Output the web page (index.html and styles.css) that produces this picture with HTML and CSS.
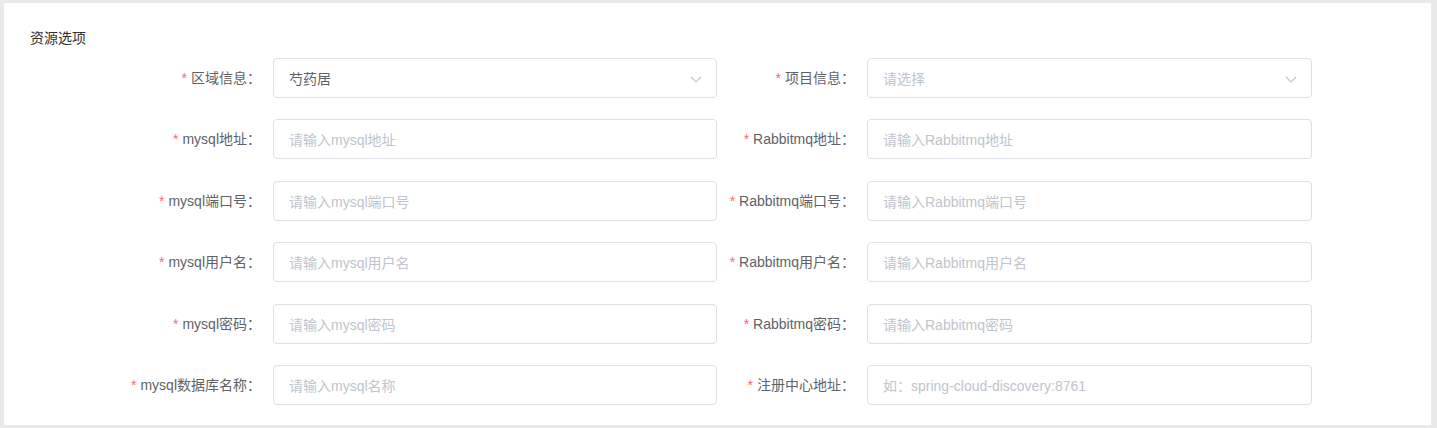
FILE: index.html
```html
<!DOCTYPE html>
<html lang="zh-CN">
<head>
<meta charset="utf-8">
<title>资源选项</title>
<link rel="stylesheet" href="styles.css">
</head>
<body>
<div class="card">
  <div class="title">资源选项</div>
  <div class="form">
    <label class="label"><span class="star">*</span>区域信息：</label>
    <div class="input select"><span class="value">芍药居</span><svg class="arrow" viewBox="0 0 12 7" width="12" height="7"><path d="M1 1 L6 6 L11 1" fill="none" stroke="#c0c4cc" stroke-width="1.1"/></svg></div>
    <label class="label"><span class="star">*</span>项目信息：</label>
    <div class="input select"><span class="ph">请选择</span><svg class="arrow" viewBox="0 0 12 7" width="12" height="7"><path d="M1 1 L6 6 L11 1" fill="none" stroke="#c0c4cc" stroke-width="1.1"/></svg></div>

    <label class="label"><span class="star">*</span>mysql地址：</label>
    <div class="input"><span class="ph">请输入mysql地址</span></div>
    <label class="label"><span class="star">*</span>Rabbitmq地址：</label>
    <div class="input"><span class="ph">请输入Rabbitmq地址</span></div>

    <label class="label"><span class="star">*</span>mysql端口号：</label>
    <div class="input"><span class="ph">请输入mysql端口号</span></div>
    <label class="label"><span class="star">*</span>Rabbitmq端口号：</label>
    <div class="input"><span class="ph">请输入Rabbitmq端口号</span></div>

    <label class="label"><span class="star">*</span>mysql用户名：</label>
    <div class="input"><span class="ph">请输入mysql用户名</span></div>
    <label class="label"><span class="star">*</span>Rabbitmq用户名：</label>
    <div class="input"><span class="ph">请输入Rabbitmq用户名</span></div>

    <label class="label"><span class="star">*</span>mysql密码：</label>
    <div class="input"><span class="ph">请输入mysql密码</span></div>
    <label class="label"><span class="star">*</span>Rabbitmq密码：</label>
    <div class="input"><span class="ph">请输入Rabbitmq密码</span></div>

    <label class="label"><span class="star">*</span>mysql数据库名称：</label>
    <div class="input"><span class="ph">请输入mysql名称</span></div>
    <label class="label"><span class="star">*</span>注册中心地址：</label>
    <div class="input"><span class="ph">如：spring-cloud-discovery:8761</span></div>
  </div>
</div>
</body>
</html>
```

FILE: styles.css
```css
html, body {
  margin: 0;
  padding: 0;
  background: #e9e9e9;
  height: 428px;
  overflow: hidden;
}
body {
  font-family: "Liberation Sans", "Noto Sans CJK SC", sans-serif;
  font-size: 14px;
  color: #606266;
}
.card {
  box-sizing: border-box;
  margin: 3px 6px 0 4px;
  height: 422px;
  background: #fff;
  padding: 25px 0 20px 26px;
}
.title {
  font-size: 14px;
  line-height: 20px;
  height: 20px;
  color: #303133;
}
.form {
  margin-top: 10px;
  margin-left: 93px;
  display: grid;
  grid-template-columns: 150px 444px 150px 445px;
  grid-auto-rows: 40px;
  row-gap: 21.4px;
}
.label {
  display: flex;
  align-items: center;
  justify-content: flex-end;
  padding-right: 12px;
  white-space: nowrap;
  line-height: 40px;
}
.star {
  color: #f56c6c;
  margin-right: 4px;
}
.input {
  box-sizing: border-box;
  border: 1px solid #dcdfe6;
  border-radius: 4px;
  height: 40px;
  padding: 0 15px;
  display: flex;
  align-items: center;
  justify-content: space-between;
  background: #fff;
}
.value {
  color: #606266;
}
.ph {
  color: #c0c4cc;
  white-space: nowrap;
}
.arrow {
  margin-top: 3px;
  margin-right: -1px;
}
```
